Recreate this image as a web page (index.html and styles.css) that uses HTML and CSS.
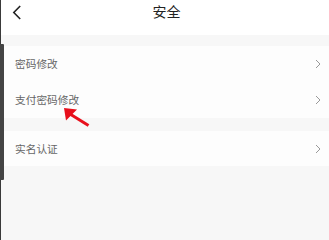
FILE: index.html
```html
<!DOCTYPE html>
<html lang="zh">
<head>
<meta charset="utf-8">
<link rel="stylesheet" href="styles.css">
</head>
<body>
<div class="page">
  <header class="topbar">
    <span class="back">
      <svg width="10" height="16" viewBox="0 0 10 16"><path d="M8.2 1 L1.8 7.5 L8.2 14" fill="none" stroke="#222" stroke-width="1.6"/></svg>
    </span>
    <h1 class="title">安全</h1>
  </header>
  <section class="group group-first">
    <div class="row"><span class="label">密码修改</span><svg class="chev" width="6" height="10" viewBox="0 0 6 10"><path d="M1 1 L5 5 L1 9" fill="none" stroke="#999" stroke-width="1"/></svg></div>
    <div class="row"><span class="label">支付密码修改</span><svg class="chev" width="6" height="10" viewBox="0 0 6 10"><path d="M1 1 L5 5 L1 9" fill="none" stroke="#999" stroke-width="1"/></svg></div>
  </section>
  <section class="group group-second">
    <div class="row row-last"><span class="label">实名认证</span><svg class="chev" width="6" height="10" viewBox="0 0 6 10"><path d="M1 1 L5 5 L1 9" fill="none" stroke="#999" stroke-width="1"/></svg></div>
  </section>
  <svg class="pointer" width="32" height="26" viewBox="0 0 32 26">
    <polygon points="4,4 17,5.5 6,16.5" fill="#e8101c"/>
    <line x1="10" y1="10" x2="28.5" y2="21.5" stroke="#e8101c" stroke-width="3"/>
  </svg>
  <div class="edge-line"></div>
  <div class="edge-bar"></div>
</div>
</body>
</html>
```

FILE: styles.css
```css
html, body {
  margin: 0;
  padding: 0;
  background: #f7f7f7;
}
.page {
  position: relative;
  width: 329px;
  min-height: 100vh;
  overflow: hidden;
  background: #f7f7f7;
  font-family: "Noto Sans CJK SC", "Noto Sans", sans-serif;
}
.topbar {
  position: relative;
  height: 35px;
  box-sizing: border-box;
  padding-top: 1px;
  background: #ffffff;
  display: flex;
  align-items: flex-start;
  justify-content: center;
}
.back {
  position: absolute;
  left: 12px;
  top: 5px;
  display: flex;
}
.title {
  margin: 0 0 0 4px;
  font-size: 14px;
  font-weight: normal;
  color: #222;
  line-height: 20px;
}
.group {
  background: #fdfdfd;
}
.group-first {
  margin-top: 11px;
}
.group-second {
  margin-top: 13px;
}
.row {
  height: 36px;
  display: flex;
  align-items: center;
  justify-content: space-between;
  padding: 0 8px 0 15px;
}
.row-last {
  height: 35px;
}
.label {
  font-size: 10.7px;
  color: #666;
  line-height: 14px;
}
.chev {
  display: block;
}
.pointer {
  position: absolute;
  left: 60px;
  top: 104px;
}
.edge-line {
  position: absolute;
  left: 0;
  top: 0;
  width: 1px;
  height: 100%;
  background: #3a3a3a;
}
.edge-bar {
  position: absolute;
  left: 0;
  top: 44px;
  width: 4px;
  height: 136px;
  background: #444;
  border-radius: 0 1px 1px 0;
}
```
